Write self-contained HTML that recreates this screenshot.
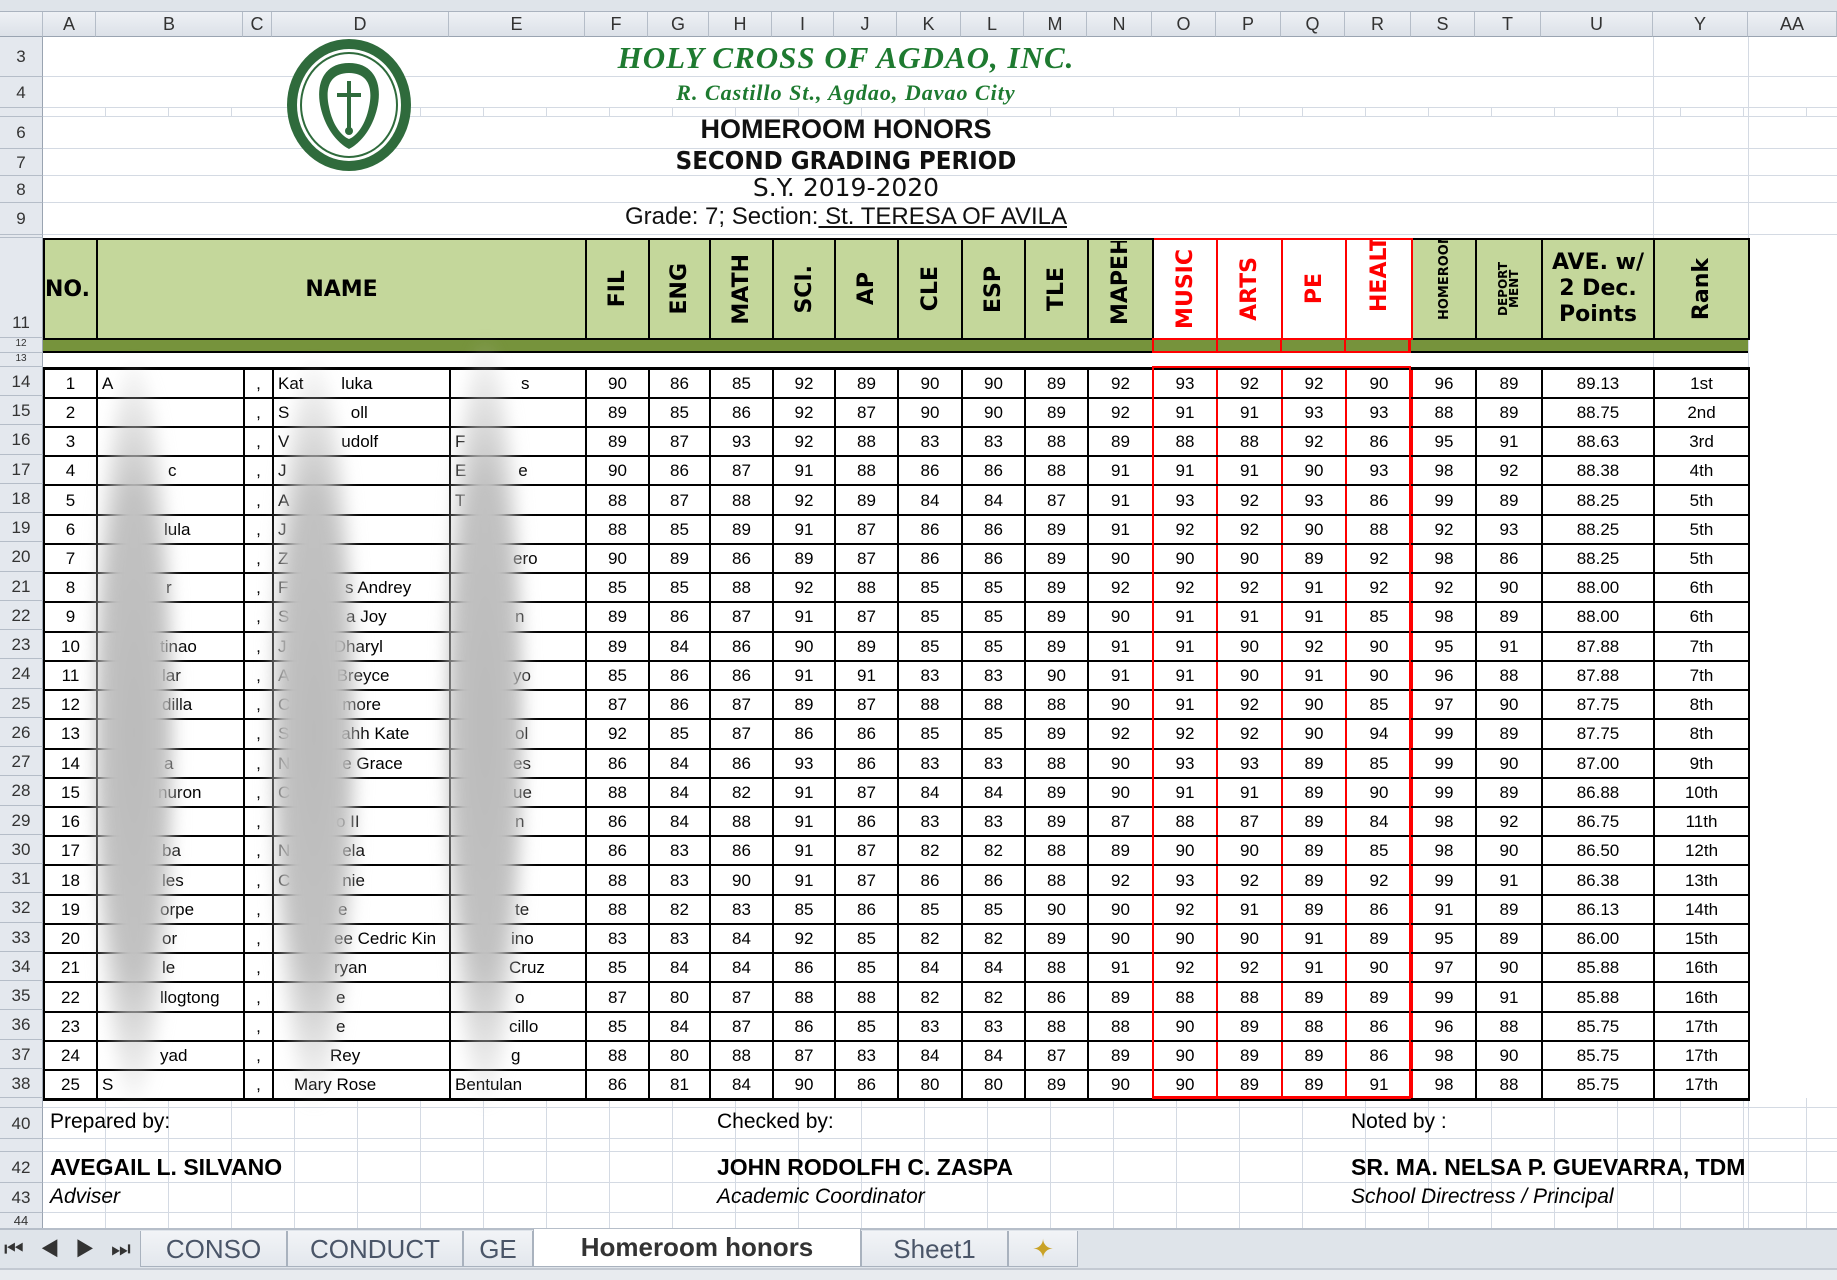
<!DOCTYPE html>
<html><head><meta charset="utf-8">
<style>
*{margin:0;padding:0;box-sizing:border-box}
body{width:1837px;height:1280px;overflow:hidden;background:#fff;font-family:"Liberation Sans",sans-serif;position:relative}
.abs{position:absolute}
.ch{position:absolute;top:12px;height:25px;background:linear-gradient(#eef1f5,#dce1e8);border-right:1px solid #b5bdc8;border-bottom:1px solid #9aa4b1;font-size:18px;color:#333;text-align:center;line-height:25px}
.rn{position:absolute;left:0;width:43px;background:#e4e8ee;border-bottom:1px solid #b5bdc8;border-right:1px solid #9aa4b1;font-size:17px;color:#333;text-align:center;overflow:hidden}
.vl{position:absolute;width:1px;background:#d4dae3}
.hl{position:absolute;height:1px;background:#d4dae3;left:43px;width:1794px}
table{border-collapse:collapse;table-layout:fixed;position:absolute}
#hd td{border:2px solid #000;background:#c4d79b;height:100px;text-align:center;vertical-align:middle;font-weight:bold;overflow:hidden;padding:0}
#hd td.r{background:#fff;border:2px solid #f00;color:#f00}
.v{writing-mode:vertical-rl;transform:rotate(180deg);margin:0 auto;white-space:nowrap;font-size:22px;max-height:96px;overflow:hidden;font-family:"DejaVu Sans","Liberation Sans",sans-serif;font-weight:bold}
#dt td{border:2px solid #000;height:29.24px;font-size:17px;text-align:center;padding:0;overflow:hidden;white-space:nowrap;line-height:25px}
#dt td.l{text-align:left;padding-left:4px}
#dt td.r{border-left:2px solid #f00;border-right:2px solid #f00}
#dt tr:first-child td{border-top:3px solid #000}
#dt tr:last-child td{border-bottom:3px solid #000}
.blob{position:absolute;background:radial-gradient(ellipse at center,#bababa 0%,#c2c2c2 45%,rgba(205,205,205,0) 72%);filter:blur(7px)}
.tab{position:absolute;top:1231px;height:36px;font-size:26px;color:#4a5568;line-height:36px;text-align:center;background:linear-gradient(#f2f4f7,#e3e7ed);border:1px solid #a9b2be;border-top:none}
</style></head><body>
<div class="abs" style="left:0;top:0;width:1837px;height:12px;background:#dfe4ea;border-bottom:1px solid #aab3bf"></div>
<div class="ch" style="left:0;width:43px"></div>
<div class="ch" style="left:43px;width:53px">A</div>
<div class="ch" style="left:96px;width:147px">B</div>
<div class="ch" style="left:243px;width:29px">C</div>
<div class="ch" style="left:272px;width:177px">D</div>
<div class="ch" style="left:449px;width:136px">E</div>
<div class="ch" style="left:585px;width:63px">F</div>
<div class="ch" style="left:648px;width:61px">G</div>
<div class="ch" style="left:709px;width:63px">H</div>
<div class="ch" style="left:772px;width:62px">I</div>
<div class="ch" style="left:834px;width:63px">J</div>
<div class="ch" style="left:897px;width:64px">K</div>
<div class="ch" style="left:961px;width:63px">L</div>
<div class="ch" style="left:1024px;width:63px">M</div>
<div class="ch" style="left:1087px;width:65px">N</div>
<div class="ch" style="left:1152px;width:64px">O</div>
<div class="ch" style="left:1216px;width:65px">P</div>
<div class="ch" style="left:1281px;width:64px">Q</div>
<div class="ch" style="left:1345px;width:66px">R</div>
<div class="ch" style="left:1411px;width:64px">S</div>
<div class="ch" style="left:1475px;width:66px">T</div>
<div class="ch" style="left:1541px;width:112px">U</div>
<div class="ch" style="left:1653px;width:95px">Y</div>
<div class="ch" style="left:1748px;width:89px">AA</div>
<div class="rn" style="top:37px;height:40px;line-height:40px">3</div>
<div class="rn" style="top:77px;height:31px;line-height:31px">4</div>
<div class="rn" style="top:108px;height:9px"></div>
<div class="rn" style="top:117px;height:32px;line-height:32px">6</div>
<div class="rn" style="top:149px;height:27px;line-height:27px">7</div>
<div class="rn" style="top:176px;height:27px;line-height:27px">8</div>
<div class="rn" style="top:203px;height:32px;line-height:32px">9</div>
<div class="rn" style="top:235px;height:3px"></div>
<div class="rn" style="top:238px;height:100px;line-height:170px">11</div>
<div class="rn" style="top:338px;height:15px;font-size:10px">12</div>
<div class="rn" style="top:353px;height:14px;font-size:10px">13</div>
<div class="rn" style="top:367px;height:29.24px;line-height:29px">14</div>
<div class="rn" style="top:396.24px;height:29.24px;line-height:29px">15</div>
<div class="rn" style="top:425.48px;height:29.24px;line-height:29px">16</div>
<div class="rn" style="top:454.72px;height:29.24px;line-height:29px">17</div>
<div class="rn" style="top:483.96px;height:29.24px;line-height:29px">18</div>
<div class="rn" style="top:513.2px;height:29.24px;line-height:29px">19</div>
<div class="rn" style="top:542.44px;height:29.24px;line-height:29px">20</div>
<div class="rn" style="top:571.68px;height:29.24px;line-height:29px">21</div>
<div class="rn" style="top:600.92px;height:29.24px;line-height:29px">22</div>
<div class="rn" style="top:630.16px;height:29.24px;line-height:29px">23</div>
<div class="rn" style="top:659.4px;height:29.24px;line-height:29px">24</div>
<div class="rn" style="top:688.64px;height:29.24px;line-height:29px">25</div>
<div class="rn" style="top:717.88px;height:29.24px;line-height:29px">26</div>
<div class="rn" style="top:747.12px;height:29.24px;line-height:29px">27</div>
<div class="rn" style="top:776.36px;height:29.24px;line-height:29px">28</div>
<div class="rn" style="top:805.6px;height:29.24px;line-height:29px">29</div>
<div class="rn" style="top:834.84px;height:29.24px;line-height:29px">30</div>
<div class="rn" style="top:864.08px;height:29.24px;line-height:29px">31</div>
<div class="rn" style="top:893.32px;height:29.24px;line-height:29px">32</div>
<div class="rn" style="top:922.56px;height:29.24px;line-height:29px">33</div>
<div class="rn" style="top:951.8px;height:29.24px;line-height:29px">34</div>
<div class="rn" style="top:981.04px;height:29.24px;line-height:29px">35</div>
<div class="rn" style="top:1010.28px;height:29.24px;line-height:29px">36</div>
<div class="rn" style="top:1039.52px;height:29.24px;line-height:29px">37</div>
<div class="rn" style="top:1068.76px;height:29.24px;line-height:29px">38</div>
<div class="rn" style="top:1098px;height:10px"></div>
<div class="rn" style="top:1108px;height:31px;line-height:31px">40</div>
<div class="rn" style="top:1139px;height:13px"></div>
<div class="rn" style="top:1152px;height:31px;line-height:31px">42</div>
<div class="rn" style="top:1183px;height:30px;line-height:30px">43</div>
<div class="rn" style="top:1213px;height:17px;font-size:13px">44</div>

<div class="hl" style="top:76px"></div><div class="hl" style="top:107px"></div><div class="hl" style="top:116px"></div>
<div class="hl" style="top:148px"></div><div class="hl" style="top:175px"></div><div class="hl" style="top:202px"></div>
<div class="hl" style="top:234px"></div><div class="hl" style="top:1107px"></div><div class="hl" style="top:1138px"></div>
<div class="hl" style="top:1151px"></div><div class="hl" style="top:1182px"></div><div class="hl" style="top:1212px"></div>
<div class="vl" style="left:1653px;top:37px;height:1193px"></div>
<div class="vl" style="left:1748px;top:37px;height:1193px"></div>
<div class="abs" style="left:43px;top:108px;width:1794px;height:9px;background:repeating-linear-gradient(90deg,transparent 0 62px,#d4dae3 62px 63px)"></div>
<div class="abs" style="left:43px;top:1098px;width:1794px;height:132px;background:repeating-linear-gradient(90deg,transparent 0 62px,#d4dae3 62px 63px)"></div>

<svg class="abs" style="left:283px;top:35px" width="132" height="140" viewBox="0 0 132 140">
<ellipse cx="66" cy="70" rx="62" ry="66" fill="#2f6b3c"/>
<ellipse cx="66" cy="70" rx="52" ry="56" fill="#fff"/>
<ellipse cx="66" cy="70" rx="48" ry="52" fill="none" stroke="#2f6b3c" stroke-width="2"/>
<path d="M66 28 C92 28 100 50 94 74 C88 98 74 110 66 114 C58 110 44 98 38 74 C32 50 40 28 66 28Z" fill="#2f6b3c"/>
<path d="M66 38 C86 38 90 54 86 72 C82 92 72 102 66 104 C60 102 50 92 46 72 C42 54 46 38 66 38Z" fill="#fff"/>
<rect x="64" y="46" width="4" height="50" fill="#2f6b3c"/>
<rect x="54" y="58" width="24" height="4" fill="#2f6b3c"/>
<circle cx="66" cy="96" r="4" fill="#2f6b3c"/>
</svg>

<div class="abs" style="left:560px;top:40px;width:572px;text-align:center;font:italic bold 31px 'Liberation Serif',serif;color:#1e7a30;letter-spacing:1px">HOLY CROSS OF AGDAO, INC.</div>
<div class="abs" style="left:560px;top:80px;width:572px;text-align:center;font:italic bold 22px 'Liberation Serif',serif;color:#1e7a30;letter-spacing:1px">R. Castillo St., Agdao, Davao City</div>
<div class="abs" style="left:560px;top:114px;width:572px;text-align:center;font-size:27px;font-weight:bold;color:#111">HOMEROOM HONORS</div>
<div class="abs" style="left:560px;top:146px;width:572px;text-align:center;font-size:25px;font-weight:bold;color:#111;font-family:'DejaVu Sans',sans-serif;transform:scaleX(.92)">SECOND GRADING PERIOD</div>
<div class="abs" style="left:560px;top:173px;width:572px;text-align:center;font-size:25px;color:#111;font-family:'DejaVu Sans',sans-serif">S.Y. 2019-2020</div>
<div class="abs" style="left:560px;top:203px;width:572px;text-align:center;font-size:24px;color:#111">Grade: 7; Section:<span style="text-decoration:underline"> St. TERESA OF AVILA</span></div>

<table id="hd" style="left:43px;top:238px;width:1705px">
<colgroup><col style="width:53px"><col style="width:489px"><col style="width:63px"><col style="width:61px"><col style="width:63px"><col style="width:62px"><col style="width:63px"><col style="width:64px"><col style="width:63px"><col style="width:63px"><col style="width:65px"><col style="width:64px"><col style="width:65px"><col style="width:64px"><col style="width:66px"><col style="width:64px"><col style="width:66px"><col style="width:112px"><col style="width:95px"></colgroup>
<tr>
<td style="font-size:22px;text-align:left;font-family:'DejaVu Sans',sans-serif">NO.</td>
<td style="font-size:22px;font-family:'DejaVu Sans',sans-serif">NAME</td>
<td><div class="v">FIL</div></td><td><div class="v">ENG</div></td><td><div class="v">MATH</div></td><td><div class="v">SCI.</div></td><td><div class="v">AP</div></td><td><div class="v">CLE</div></td><td><div class="v">ESP</div></td><td><div class="v">TLE</div></td>
<td><div class="v" style="max-height:84px;margin-top:-12px">MAPEH</div></td>
<td class="r"><div class="v">MUSIC</div></td><td class="r"><div class="v">ARTS</div></td><td class="r"><div class="v">PE</div></td><td class="r" style="vertical-align:top"><div class="v" style="max-height:84px;margin-top:-12px">HEALTH</div></td>
<td style="vertical-align:top"><div class="v" style="font-size:13px;max-height:88px;margin-top:-8px">HOMEROOM</div></td>
<td><div class="v" style="font-size:12px;line-height:11px">DEPORT<br>MENT</div></td>
<td style="font-size:22px;line-height:26px;font-family:'DejaVu Sans',sans-serif">AVE. w/<br>2 Dec.<br>Points</td>
<td><div class="v">Rank</div></td>
</tr></table>
<div class="abs" style="left:43px;top:340px;width:1705px;height:13px;background:#76933c;border-bottom:2px solid #000"></div>
<div class="abs" style="left:1152px;top:338px;width:259px;height:15px;border:2px solid #f00;border-top:none;background:repeating-linear-gradient(90deg,transparent 0 62px,#f00 62px 64px)"></div>

<table id="dt" style="left:43px;top:367px;width:1705px">
<colgroup><col style="width:53px"><col style="width:147px"><col style="width:29px"><col style="width:177px"><col style="width:136px"><col style="width:63px"><col style="width:61px"><col style="width:63px"><col style="width:62px"><col style="width:63px"><col style="width:64px"><col style="width:63px"><col style="width:63px"><col style="width:65px"><col style="width:64px"><col style="width:65px"><col style="width:64px"><col style="width:66px"><col style="width:64px"><col style="width:66px"><col style="width:112px"><col style="width:95px"></colgroup>
<tr><td>1</td><td class="l">A</td><td>,</td><td class="l">Kat&nbsp;&nbsp;&nbsp;&nbsp;&nbsp;&nbsp;&nbsp;&nbsp;luka</td><td class="l" style="padding-left:70px">s</td><td>90</td><td>86</td><td>85</td><td>92</td><td>89</td><td>90</td><td>90</td><td>89</td><td>92</td><td class="r">93</td><td class="r">92</td><td class="r">92</td><td class="r">90</td><td>96</td><td>89</td><td>89.13</td><td>1st</td></tr>
<tr><td>2</td><td class="l"></td><td>,</td><td class="l">S&nbsp;&nbsp;&nbsp;&nbsp;&nbsp;&nbsp;&nbsp;&nbsp;&nbsp;&nbsp;&nbsp;&nbsp;&nbsp;oll</td><td class="l"></td><td>89</td><td>85</td><td>86</td><td>92</td><td>87</td><td>90</td><td>90</td><td>89</td><td>92</td><td class="r">91</td><td class="r">91</td><td class="r">93</td><td class="r">93</td><td>88</td><td>89</td><td>88.75</td><td>2nd</td></tr>
<tr><td>3</td><td class="l"></td><td>,</td><td class="l">V&nbsp;&nbsp;&nbsp;&nbsp;&nbsp;&nbsp;&nbsp;&nbsp;&nbsp;&nbsp;&nbsp;udolf</td><td class="l">F</td><td>89</td><td>87</td><td>93</td><td>92</td><td>88</td><td>83</td><td>83</td><td>88</td><td>89</td><td class="r">88</td><td class="r">88</td><td class="r">92</td><td class="r">86</td><td>95</td><td>91</td><td>88.63</td><td>3rd</td></tr>
<tr><td>4</td><td class="l" style="padding-left:70px">c</td><td>,</td><td class="l">J</td><td class="l">E&nbsp;&nbsp;&nbsp;&nbsp;&nbsp;&nbsp;&nbsp;&nbsp;&nbsp;&nbsp;&nbsp;e</td><td>90</td><td>86</td><td>87</td><td>91</td><td>88</td><td>86</td><td>86</td><td>88</td><td>91</td><td class="r">91</td><td class="r">91</td><td class="r">90</td><td class="r">93</td><td>98</td><td>92</td><td>88.38</td><td>4th</td></tr>
<tr><td>5</td><td class="l"></td><td>,</td><td class="l">A</td><td class="l">T</td><td>88</td><td>87</td><td>88</td><td>92</td><td>89</td><td>84</td><td>84</td><td>87</td><td>91</td><td class="r">93</td><td class="r">92</td><td class="r">93</td><td class="r">86</td><td>99</td><td>89</td><td>88.25</td><td>5th</td></tr>
<tr><td>6</td><td class="l" style="padding-left:66px">lula</td><td>,</td><td class="l">J</td><td class="l"></td><td>88</td><td>85</td><td>89</td><td>91</td><td>87</td><td>86</td><td>86</td><td>89</td><td>91</td><td class="r">92</td><td class="r">92</td><td class="r">90</td><td class="r">88</td><td>92</td><td>93</td><td>88.25</td><td>5th</td></tr>
<tr><td>7</td><td class="l"></td><td>,</td><td class="l">Z</td><td class="l" style="padding-left:62px">ero</td><td>90</td><td>89</td><td>86</td><td>89</td><td>87</td><td>86</td><td>86</td><td>89</td><td>90</td><td class="r">90</td><td class="r">90</td><td class="r">89</td><td class="r">92</td><td>98</td><td>86</td><td>88.25</td><td>5th</td></tr>
<tr><td>8</td><td class="l" style="padding-left:68px">r</td><td>,</td><td class="l">F&nbsp;&nbsp;&nbsp;&nbsp;&nbsp;&nbsp;&nbsp;&nbsp;&nbsp;&nbsp;&nbsp;&nbsp;s Andrey</td><td class="l"></td><td>85</td><td>85</td><td>88</td><td>92</td><td>88</td><td>85</td><td>85</td><td>89</td><td>92</td><td class="r">92</td><td class="r">92</td><td class="r">91</td><td class="r">92</td><td>92</td><td>90</td><td>88.00</td><td>6th</td></tr>
<tr><td>9</td><td class="l"></td><td>,</td><td class="l">S&nbsp;&nbsp;&nbsp;&nbsp;&nbsp;&nbsp;&nbsp;&nbsp;&nbsp;&nbsp;&nbsp;&nbsp;a Joy</td><td class="l" style="padding-left:64px">n</td><td>89</td><td>86</td><td>87</td><td>91</td><td>87</td><td>85</td><td>85</td><td>89</td><td>90</td><td class="r">91</td><td class="r">91</td><td class="r">91</td><td class="r">85</td><td>98</td><td>89</td><td>88.00</td><td>6th</td></tr>
<tr><td>10</td><td class="l" style="padding-left:62px">tinao</td><td>,</td><td class="l">J&nbsp;&nbsp;&nbsp;&nbsp;&nbsp;&nbsp;&nbsp;&nbsp;&nbsp;&nbsp;Dharyl</td><td class="l"></td><td>89</td><td>84</td><td>86</td><td>90</td><td>89</td><td>85</td><td>85</td><td>89</td><td>91</td><td class="r">91</td><td class="r">90</td><td class="r">92</td><td class="r">90</td><td>95</td><td>91</td><td>87.88</td><td>7th</td></tr>
<tr><td>11</td><td class="l" style="padding-left:64px">lar</td><td>,</td><td class="l">A&nbsp;&nbsp;&nbsp;&nbsp;&nbsp;&nbsp;&nbsp;&nbsp;&nbsp;&nbsp;Breyce</td><td class="l" style="padding-left:62px">yo</td><td>85</td><td>86</td><td>86</td><td>91</td><td>91</td><td>83</td><td>83</td><td>90</td><td>91</td><td class="r">91</td><td class="r">90</td><td class="r">91</td><td class="r">90</td><td>96</td><td>88</td><td>87.88</td><td>7th</td></tr>
<tr><td>12</td><td class="l" style="padding-left:64px">dilla</td><td>,</td><td class="l">C&nbsp;&nbsp;&nbsp;&nbsp;&nbsp;&nbsp;&nbsp;&nbsp;&nbsp;&nbsp;&nbsp;more</td><td class="l"></td><td>87</td><td>86</td><td>87</td><td>89</td><td>87</td><td>88</td><td>88</td><td>88</td><td>90</td><td class="r">91</td><td class="r">92</td><td class="r">90</td><td class="r">85</td><td>97</td><td>90</td><td>87.75</td><td>8th</td></tr>
<tr><td>13</td><td class="l"></td><td>,</td><td class="l">S&nbsp;&nbsp;&nbsp;&nbsp;&nbsp;&nbsp;&nbsp;&nbsp;&nbsp;&nbsp;&nbsp;ahh Kate</td><td class="l" style="padding-left:64px">ol</td><td>92</td><td>85</td><td>87</td><td>86</td><td>86</td><td>85</td><td>85</td><td>89</td><td>92</td><td class="r">92</td><td class="r">92</td><td class="r">90</td><td class="r">94</td><td>99</td><td>89</td><td>87.75</td><td>8th</td></tr>
<tr><td>14</td><td class="l" style="padding-left:66px">a</td><td>,</td><td class="l">N&nbsp;&nbsp;&nbsp;&nbsp;&nbsp;&nbsp;&nbsp;&nbsp;&nbsp;&nbsp;&nbsp;e Grace</td><td class="l" style="padding-left:62px">es</td><td>86</td><td>84</td><td>86</td><td>93</td><td>86</td><td>83</td><td>83</td><td>88</td><td>90</td><td class="r">93</td><td class="r">93</td><td class="r">89</td><td class="r">85</td><td>99</td><td>90</td><td>87.00</td><td>9th</td></tr>
<tr><td>15</td><td class="l" style="padding-left:60px">nuron</td><td>,</td><td class="l">C</td><td class="l" style="padding-left:62px">ue</td><td>88</td><td>84</td><td>82</td><td>91</td><td>87</td><td>84</td><td>84</td><td>89</td><td>90</td><td class="r">91</td><td class="r">91</td><td class="r">89</td><td class="r">90</td><td>99</td><td>89</td><td>86.88</td><td>10th</td></tr>
<tr><td>16</td><td class="l"></td><td>,</td><td class="l" style="padding-left:62px">o II</td><td class="l" style="padding-left:64px">n</td><td>86</td><td>84</td><td>88</td><td>91</td><td>86</td><td>83</td><td>83</td><td>89</td><td>87</td><td class="r">88</td><td class="r">87</td><td class="r">89</td><td class="r">84</td><td>98</td><td>92</td><td>86.75</td><td>11th</td></tr>
<tr><td>17</td><td class="l" style="padding-left:64px">ba</td><td>,</td><td class="l">N&nbsp;&nbsp;&nbsp;&nbsp;&nbsp;&nbsp;&nbsp;&nbsp;&nbsp;&nbsp;&nbsp;ela</td><td class="l"></td><td>86</td><td>83</td><td>86</td><td>91</td><td>87</td><td>82</td><td>82</td><td>88</td><td>89</td><td class="r">90</td><td class="r">90</td><td class="r">89</td><td class="r">85</td><td>98</td><td>90</td><td>86.50</td><td>12th</td></tr>
<tr><td>18</td><td class="l" style="padding-left:64px">les</td><td>,</td><td class="l">C&nbsp;&nbsp;&nbsp;&nbsp;&nbsp;&nbsp;&nbsp;&nbsp;&nbsp;&nbsp;&nbsp;nie</td><td class="l"></td><td>88</td><td>83</td><td>90</td><td>91</td><td>87</td><td>86</td><td>86</td><td>88</td><td>92</td><td class="r">93</td><td class="r">92</td><td class="r">89</td><td class="r">92</td><td>99</td><td>91</td><td>86.38</td><td>13th</td></tr>
<tr><td>19</td><td class="l" style="padding-left:62px">orpe</td><td>,</td><td class="l" style="padding-left:64px">e</td><td class="l" style="padding-left:64px">te</td><td>88</td><td>82</td><td>83</td><td>85</td><td>86</td><td>85</td><td>85</td><td>90</td><td>90</td><td class="r">92</td><td class="r">91</td><td class="r">89</td><td class="r">86</td><td>91</td><td>89</td><td>86.13</td><td>14th</td></tr>
<tr><td>20</td><td class="l" style="padding-left:64px">or</td><td>,</td><td class="l" style="padding-left:60px">ee Cedric Kin</td><td class="l" style="padding-left:60px">ino</td><td>83</td><td>83</td><td>84</td><td>92</td><td>85</td><td>82</td><td>82</td><td>89</td><td>90</td><td class="r">90</td><td class="r">90</td><td class="r">91</td><td class="r">89</td><td>95</td><td>89</td><td>86.00</td><td>15th</td></tr>
<tr><td>21</td><td class="l" style="padding-left:64px">le</td><td>,</td><td class="l" style="padding-left:60px">ryan</td><td class="l" style="padding-left:58px">Cruz</td><td>85</td><td>84</td><td>84</td><td>86</td><td>85</td><td>84</td><td>84</td><td>88</td><td>91</td><td class="r">92</td><td class="r">92</td><td class="r">91</td><td class="r">90</td><td>97</td><td>90</td><td>85.88</td><td>16th</td></tr>
<tr><td>22</td><td class="l" style="padding-left:62px">llogtong</td><td>,</td><td class="l" style="padding-left:62px">e</td><td class="l" style="padding-left:64px">o</td><td>87</td><td>80</td><td>87</td><td>88</td><td>88</td><td>82</td><td>82</td><td>86</td><td>89</td><td class="r">88</td><td class="r">88</td><td class="r">89</td><td class="r">89</td><td>99</td><td>91</td><td>85.88</td><td>16th</td></tr>
<tr><td>23</td><td class="l"></td><td>,</td><td class="l" style="padding-left:62px">e</td><td class="l" style="padding-left:58px">cillo</td><td>85</td><td>84</td><td>87</td><td>86</td><td>85</td><td>83</td><td>83</td><td>88</td><td>88</td><td class="r">90</td><td class="r">89</td><td class="r">88</td><td class="r">86</td><td>96</td><td>88</td><td>85.75</td><td>17th</td></tr>
<tr><td>24</td><td class="l" style="padding-left:62px">yad</td><td>,</td><td class="l" style="padding-left:56px">Rey</td><td class="l" style="padding-left:60px">g</td><td>88</td><td>80</td><td>88</td><td>87</td><td>83</td><td>84</td><td>84</td><td>87</td><td>89</td><td class="r">90</td><td class="r">89</td><td class="r">89</td><td class="r">86</td><td>98</td><td>90</td><td>85.75</td><td>17th</td></tr>
<tr><td>25</td><td class="l">S</td><td>,</td><td class="l" style="padding-left:20px">Mary Rose</td><td class="l">Bentulan</td><td>86</td><td>81</td><td>84</td><td>90</td><td>86</td><td>80</td><td>80</td><td>89</td><td>90</td><td class="r">90</td><td class="r">89</td><td class="r">89</td><td class="r">91</td><td>98</td><td>88</td><td>85.75</td><td>17th</td></tr>
</table>
<div class="abs" style="left:1152px;top:366px;width:259px;height:733px;border:2px solid #f00;border-bottom-width:3px"></div>

<div class="blob" style="left:88px;top:360px;width:92px;height:745px"></div>
<div class="blob" style="left:266px;top:360px;width:96px;height:745px"></div>
<div class="blob" style="left:440px;top:340px;width:90px;height:765px"></div>

<div class="abs" style="left:50px;top:1110px;font-size:21px">Prepared by:</div>
<div class="abs" style="left:717px;top:1110px;font-size:21px">Checked by:</div>
<div class="abs" style="left:1351px;top:1110px;font-size:21px">Noted by :</div>
<div class="abs" style="left:50px;top:1154px;font-size:23px;font-weight:bold">AVEGAIL L. SILVANO</div>
<div class="abs" style="left:717px;top:1154px;font-size:23px;font-weight:bold">JOHN RODOLFH C. ZASPA</div>
<div class="abs" style="left:1351px;top:1154px;font-size:23px;font-weight:bold">SR. MA. NELSA P. GUEVARRA, TDM</div>
<div class="abs" style="left:50px;top:1185px;font-size:21px;font-style:italic">Adviser</div>
<div class="abs" style="left:717px;top:1185px;font-size:21px;font-style:italic">Academic Coordinator</div>
<div class="abs" style="left:1351px;top:1185px;font-size:21px;font-style:italic">School Directress / Principal</div>

<div class="abs" style="left:0;top:1228px;width:1837px;height:41px;background:#dfe4ea;border-top:2px solid #b6bec9"></div>
<div class="abs" style="left:0;top:1268px;width:1837px;height:12px;background:#e8ebef;border-top:2px solid #c3c9d2"></div>
<div class="abs" style="left:4px;top:1236px;font-size:22px;color:#333;letter-spacing:16px">⏮◀▶⏭</div>
<div class="tab" style="left:140px;width:147px">CONSO</div>
<div class="tab" style="left:287px;width:176px">CONDUCT</div>
<div class="tab" style="left:463px;width:70px">GE</div>
<div class="tab" style="left:533px;width:328px;background:#fff;color:#333;font-weight:bold;top:1229px;height:38px">Homeroom honors</div>
<div class="tab" style="left:861px;width:147px">Sheet1</div>
<div class="tab" style="left:1008px;width:70px;color:#c9a227">✦</div>
</body></html>
